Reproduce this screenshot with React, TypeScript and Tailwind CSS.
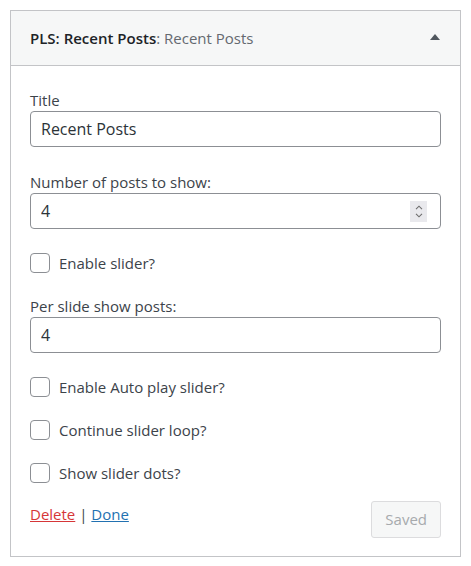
const font = { fontFamily: '"Open Sans", "Noto Sans", Arial, sans-serif' };

function Checkbox({ label }: { label: string }) {
  return (
    <label className="flex h-[20px] items-center gap-[9px]">
      <span className="h-[20px] w-[20px] shrink-0 rounded-[4px] border border-[#8c8f94] bg-white" />
      <span className="text-[15px] leading-[20px] text-[#3c434a]">{label}</span>
    </label>
  );
}

function Field({ label, value, spinner }: { label: string; value: string; spinner?: boolean }) {
  return (
    <div className="flex flex-col">
      <span className="text-[15px] leading-[20px] text-[#3c434a]">{label}</span>
      <div className="mt-px flex h-[36px] items-center rounded-[4px] border border-[#8c8f94] bg-white pl-[10px] pr-[13px]">
        <input
          readOnly
          value={value}
          className="min-w-0 flex-1 bg-transparent text-[16px] text-[#2c3338] outline-none"
          style={font}
        />
        {spinner && (
          <div className="flex h-[21px] w-[17px] flex-col items-center justify-center gap-[3px] bg-[#e9e9ed]">
            <svg width="8" height="5" viewBox="0 0 8 5" fill="none">
              <path d="M1 4.2 L4 1.2 L7 4.2" stroke="#6d6d6d" strokeWidth="1.1" />
            </svg>
            <svg width="8" height="5" viewBox="0 0 8 5" fill="none">
              <path d="M1 0.8 L4 3.8 L7 0.8" stroke="#6d6d6d" strokeWidth="1.1" />
            </svg>
          </div>
        )}
      </div>
    </div>
  );
}

export default function App() {
  return (
    <div className="min-h-[566px] bg-white p-[10px]" style={font}>
      <div className="border border-[#c3c4c7] bg-white">
        <div className="flex h-[55px] items-center justify-between border-b border-[#c3c4c7] bg-[#f6f7f7] pl-[19px] pr-[20px]">
          <h3 className="text-[15px] font-semibold text-[#1d2327]">
            PLS: Recent Posts<span className="font-normal text-[#646970]">: Recent Posts</span>
          </h3>
          <svg width="10" height="6" viewBox="0 0 10 6" className="mb-[3px]">
            <path d="M0 6 L5 0 L10 6 Z" fill="#50575e" />
          </svg>
        </div>

        <div className="flex flex-col px-[19px] pb-[18px] pt-[24px]">
          <Field label="Title" value="Recent Posts" />
          <div className="mt-[25px]">
            <Field label="Number of posts to show:" value="4" spinner />
          </div>
          <div className="mt-[24px]">
            <Checkbox label="Enable slider?" />
          </div>
          <div className="mt-[23px]">
            <Field label="Per slide show posts:" value="4" />
          </div>
          <div className="mt-[24px] flex flex-col gap-[23px]">
            <Checkbox label="Enable Auto play slider?" />
            <Checkbox label="Continue slider loop?" />
            <Checkbox label="Show slider dots?" />
          </div>

          <div className="mt-[18px] flex items-start justify-between">
            <div className="mt-[3px] text-[15px] leading-[20px] text-[#3c434a]">
              <a href="#" className="text-[#d63638] underline">Delete</a>
              {' | '}
              <a href="#" className="text-[#2271b1] underline">Done</a>
            </div>
            <button
              disabled
              className="h-[37px] rounded-[3px] border border-[#dcdcde] bg-[#f6f7f7] px-[13px] text-[15px] text-[#a7aaad]"
            >
              Saved
            </button>
          </div>
        </div>
      </div>
    </div>
  );
}
